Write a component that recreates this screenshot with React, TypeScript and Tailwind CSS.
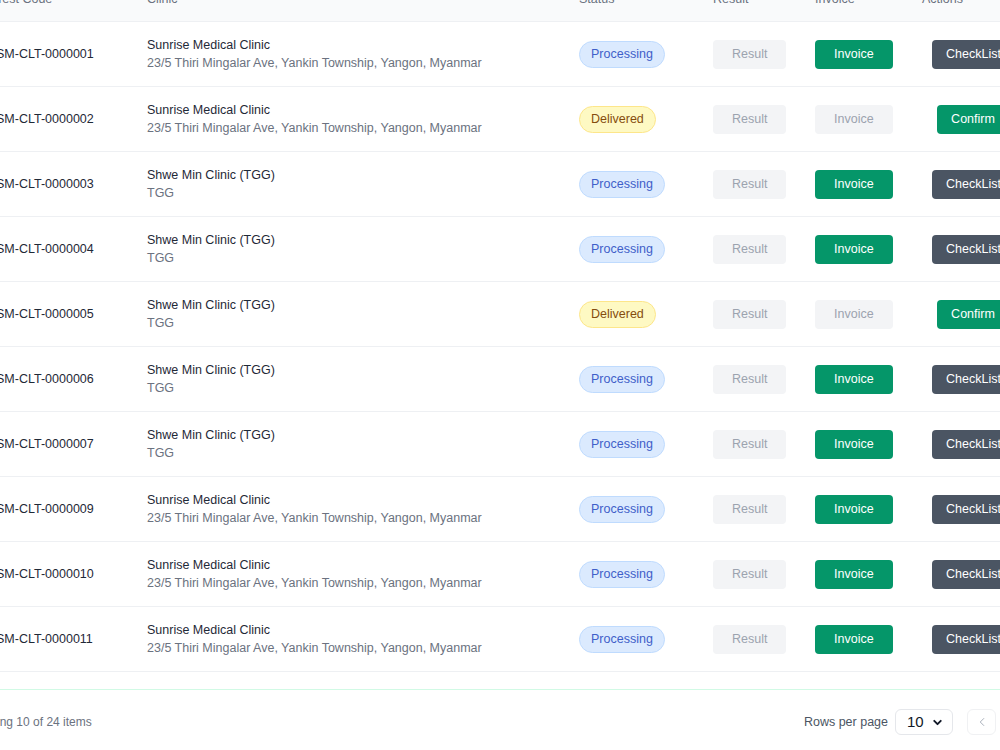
import { ChevronDown, ChevronLeft, ChevronRight } from 'lucide-react';

type Row = {
  code: string;
  clinic: string;
  address: string;
  status: 'Processing' | 'Delivered';
};

const sunrise = {
  clinic: 'Sunrise Medical Clinic',
  address: '23/5 Thiri Mingalar Ave, Yankin Township, Yangon, Myanmar',
};
const shweMin = { clinic: 'Shwe Min Clinic (TGG)', address: 'TGG' };

const rows: Row[] = [
  { code: 'SM-CLT-0000001', ...sunrise, status: 'Processing' },
  { code: 'SM-CLT-0000002', ...sunrise, status: 'Delivered' },
  { code: 'SM-CLT-0000003', ...shweMin, status: 'Processing' },
  { code: 'SM-CLT-0000004', ...shweMin, status: 'Processing' },
  { code: 'SM-CLT-0000005', ...shweMin, status: 'Delivered' },
  { code: 'SM-CLT-0000006', ...shweMin, status: 'Processing' },
  { code: 'SM-CLT-0000007', ...shweMin, status: 'Processing' },
  { code: 'SM-CLT-0000009', ...sunrise, status: 'Processing' },
  { code: 'SM-CLT-0000010', ...sunrise, status: 'Processing' },
  { code: 'SM-CLT-0000011', ...sunrise, status: 'Processing' },
];

function StatusBadge({ status }: { status: Row['status'] }) {
  if (status === 'Delivered') {
    return (
      <span className="inline-block rounded-full border border-[#fde68a] bg-[#fef9c3] px-[11px] py-[5px] leading-[15px] text-[#854d0e]">
        Delivered
      </span>
    );
  }
  return (
    <span className="inline-block rounded-full border border-[#bfdbfe] bg-[#dbeafe] px-[11px] py-[5px] leading-[15px] text-[#3f5fc9]">
      Processing
    </span>
  );
}

export default function App() {
  return (
    <div className="h-[750px] w-[1000px] overflow-hidden bg-white font-['Liberation_Sans',Arial,sans-serif] text-[12.5px]">
      <div className="-ml-[41px] -mt-[22px] w-[1177px]">
        {/* Table */}
        <div className="pl-[21px]">
          <table className="w-[1060px] table-fixed border-separate border-spacing-0">
            <colgroup>
              <col className="w-[151px]" />
              <col className="w-[432px]" />
              <col className="w-[134px]" />
              <col className="w-[102px]" />
              <col className="w-[107px]" />
              <col className="w-[134px]" />
            </colgroup>
            <thead>
              <tr className="bg-[#f9fafb] text-left text-[#6b7280]">
                <th className="h-[44px] border-b border-[#eef0f3] px-4 font-normal">Test Code</th>
                <th className="h-[44px] border-b border-[#eef0f3] px-4 font-normal">Clinic</th>
                <th className="h-[44px] border-b border-[#eef0f3] px-4 font-normal">Status</th>
                <th className="h-[44px] border-b border-[#eef0f3] px-4 font-normal">Result</th>
                <th className="h-[44px] border-b border-[#eef0f3] px-4 font-normal">Invoice</th>
                <th className="h-[44px] border-b border-[#eef0f3] px-4 font-normal">Actions</th>
              </tr>
            </thead>
            <tbody>
              {rows.map((row) => {
                const delivered = row.status === 'Delivered';
                return (
                  <tr key={row.code}>
                    <td className="h-[65px] border-b border-[#eef0f3] px-4 text-[#1f2937]">{row.code}</td>
                    <td className="h-[65px] border-b border-[#eef0f3] px-4 leading-[18px]">
                      <div className="text-[#1f2937]">{row.clinic}</div>
                      <div className="text-[#6b7280]">{row.address}</div>
                    </td>
                    <td className="h-[65px] border-b border-[#eef0f3] px-4">
                      <StatusBadge status={row.status} />
                    </td>
                    <td className="h-[65px] border-b border-[#eef0f3] px-4">
                      <span className="inline-flex h-[29px] items-center rounded-[4px] bg-[#f3f4f6] px-[19px] text-[#9ca3af]">
                        Result
                      </span>
                    </td>
                    <td className="h-[65px] border-b border-[#eef0f3] px-4">
                      {delivered ? (
                        <span className="inline-flex h-[29px] items-center rounded-[4px] bg-[#f3f4f6] px-[19px] text-[#9ca3af]">
                          Invoice
                        </span>
                      ) : (
                        <span className="inline-flex h-[29px] items-center rounded-[4px] bg-[#059669] px-[19px] text-white">
                          Invoice
                        </span>
                      )}
                    </td>
                    <td className="h-[65px] border-b border-[#eef0f3] px-[26px] text-center">
                      {delivered ? (
                        <span className="inline-flex h-[29px] items-center rounded-[4px] bg-[#059669] px-[14px] text-white">
                          Confirm
                        </span>
                      ) : (
                        <span className="inline-flex h-[29px] items-center rounded-[4px] bg-[#4b5563] px-[14px] text-white">
                          CheckList
                        </span>
                      )}
                    </td>
                  </tr>
                );
              })}
            </tbody>
          </table>
        </div>

        {/* Footer */}
        <div className="mt-[17px] flex items-center justify-between border-t border-[#d1fae5] px-2 pt-[19px]">
          <span className="text-[12px] text-[#6b7280]">Showing 10 of 24 items</span>
          <div className="flex items-center">
            <span className="text-[#4b5563]">Rows per page</span>
            <div className="ml-[7px] flex h-[26px] w-[58px] items-center justify-between rounded-md border border-[#e5e7eb] pl-[11px] pr-[8px] text-[15px] text-[#111827]">
              10
              <ChevronDown size={13} strokeWidth={3.5} />
            </div>
            <div className="ml-[14px] flex items-center gap-1">
              <span className="flex h-[26px] w-[29px] items-center justify-center rounded-md border border-[#f0f1f3] text-[#9ca3af]">
                <ChevronLeft size={14} strokeWidth={1.5} />
              </span>
              <span className="flex h-[26px] w-[29px] items-center justify-center rounded-md bg-[#059669] text-white">1</span>
              <span className="flex h-[26px] w-[29px] items-center justify-center rounded-md border border-[#e5e7eb] text-[#374151]">2</span>
              <span className="flex h-[26px] w-[29px] items-center justify-center rounded-md border border-[#e5e7eb] text-[#374151]">3</span>
              <span className="flex h-[26px] w-[29px] items-center justify-center rounded-md border border-[#e5e7eb] text-[#374151]">
                <ChevronRight size={14} strokeWidth={1.5} />
              </span>
            </div>
          </div>
        </div>
      </div>
    </div>
  );
}
